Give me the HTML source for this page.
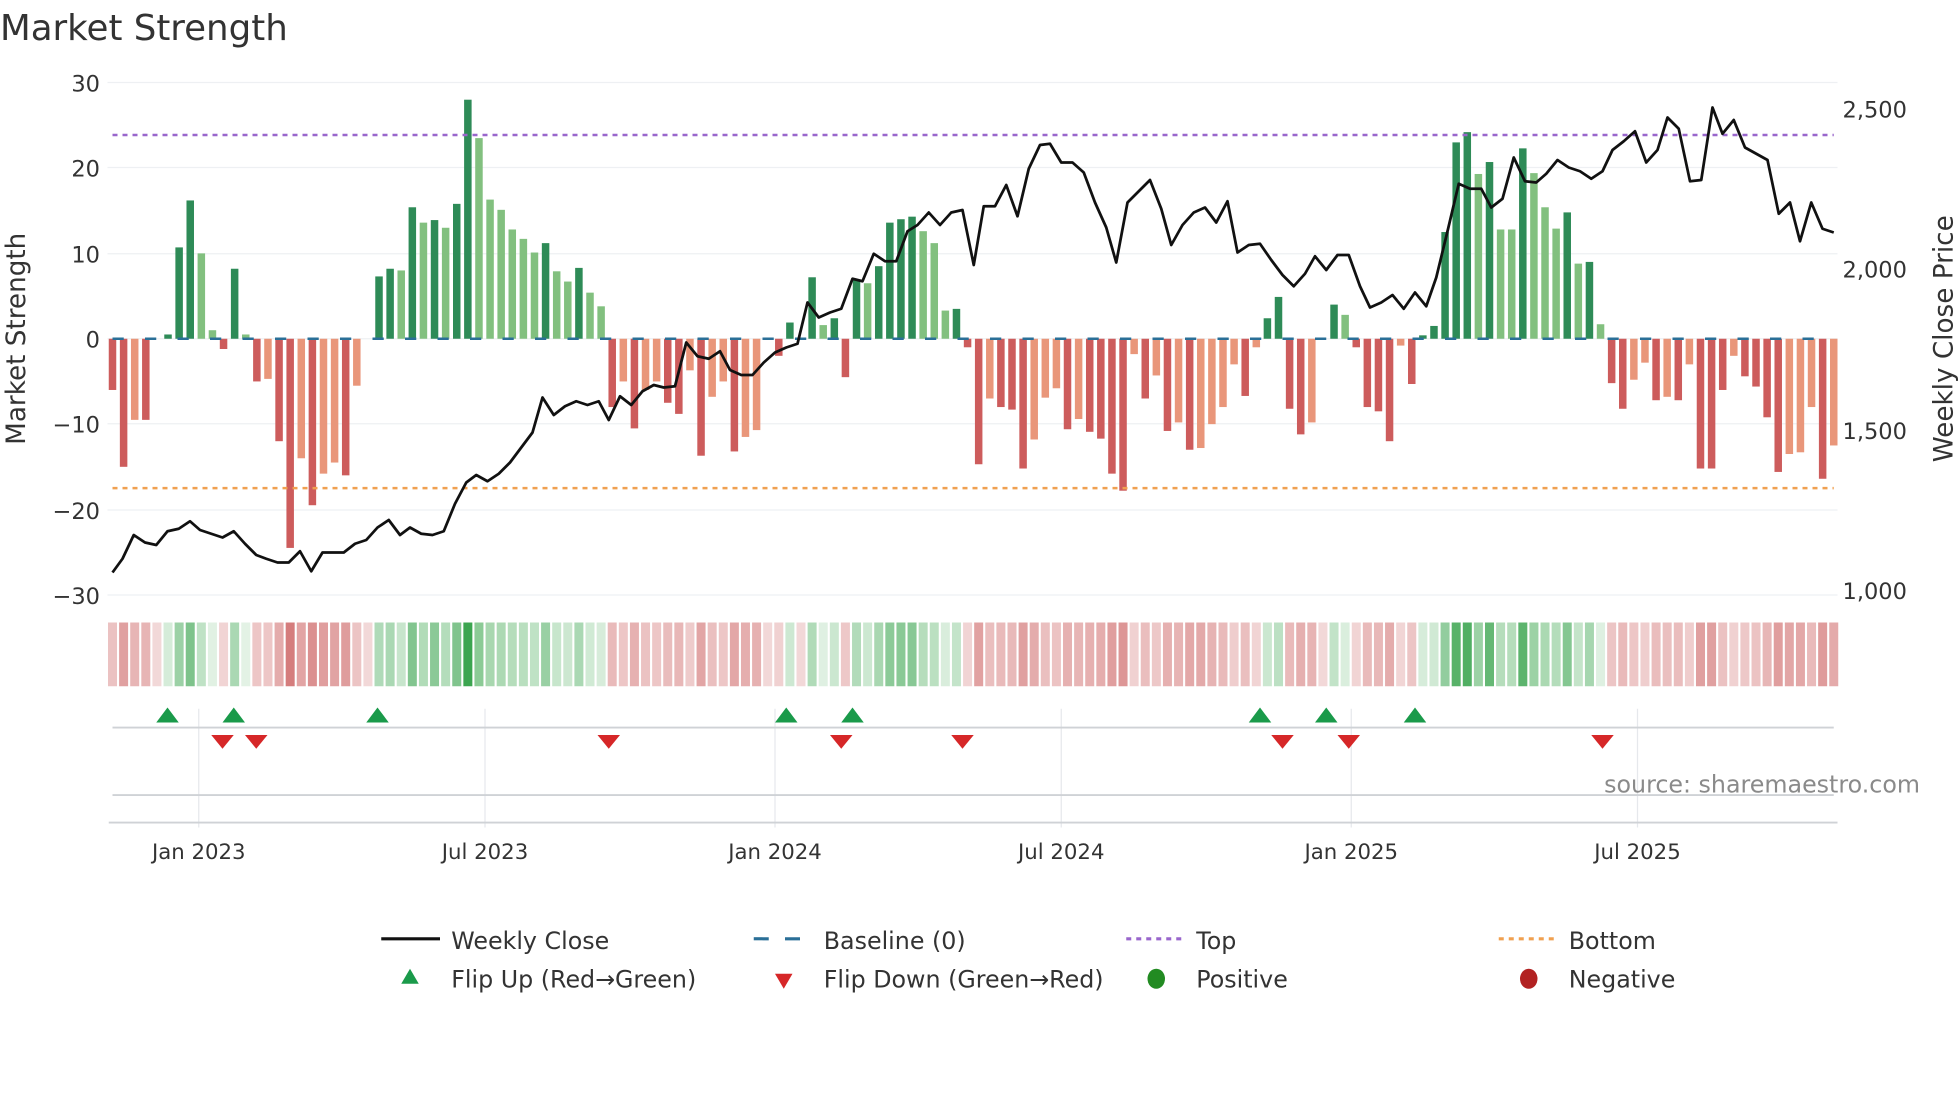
<!DOCTYPE html>
<html><head><meta charset="utf-8"><style>
html,body{margin:0;padding:0;background:#fff;width:1960px;height:1102px;overflow:hidden}
svg{display:block}
text{font-family:"DejaVu Sans","Liberation Sans",sans-serif;fill:#333}
</style></head><body>
<svg id="s" width="1960" height="1102" viewBox="0 0 1568 881.6" xmlns="http://www.w3.org/2000/svg">
<text x="0" y="32" font-size="28.5" fill="#333">Market Strength</text>
<g id="grid"></g>
<g id="bars"></g>
<line x1="90" y1="271" x2="1467" y2="271" stroke="#2a6f97" stroke-width="2" stroke-dasharray="9,17"/>
<line x1="90" y1="108" x2="1467" y2="108" stroke="#9966cc" stroke-width="2" stroke-dasharray="4,4"/>
<line x1="90" y1="390.5" x2="1467" y2="390.5" stroke="#f0a050" stroke-width="2" stroke-dasharray="4,4"/>
<polyline id="price" fill="none" stroke="#111" stroke-width="2.2" stroke-linejoin="round"/>
<g id="heat"></g>
<g id="flips"></g>
<g font-size="18" text-anchor="end">
<text x="80" y="73">30</text><text x="80" y="141">20</text><text x="80" y="210">10</text><text x="80" y="278">0</text>
<text x="80" y="346">−10</text><text x="80" y="415">−20</text><text x="80" y="483">−30</text>
</g>
<g font-size="18" text-anchor="start">
<text x="1474" y="94">2,500</text><text x="1474" y="222">2,000</text><text x="1474" y="351">1,500</text><text x="1474" y="479">1,000</text>
</g>
<text transform="translate(20,271) rotate(-90)" font-size="21" text-anchor="middle">Market Strength</text>
<text transform="translate(1562,271) rotate(-90)" font-size="21" text-anchor="middle">Weekly Close Price</text>
<g font-size="17" text-anchor="middle">
<text x="159" y="687">Jan 2023</text><text x="388" y="687">Jul 2023</text><text x="620" y="687">Jan 2024</text>
<text x="849" y="687">Jul 2024</text><text x="1081" y="687">Jan 2025</text><text x="1310" y="687">Jul 2025</text>
</g>
<text x="1536" y="634" font-size="19" text-anchor="end" style="fill:#8a8a8a">source: sharemaestro.com</text>
<g font-size="19">
<line x1="305" y1="751" x2="352" y2="751" stroke="#111" stroke-width="2.5"/><text x="361" y="759">Weekly Close</text>
<line x1="603" y1="751" x2="647" y2="751" stroke="#2a6f97" stroke-width="2.5" stroke-dasharray="12,13"/><text x="659" y="759">Baseline (0)</text>
<line x1="901" y1="751" x2="945" y2="751" stroke="#9966cc" stroke-width="2.5" stroke-dasharray="4,4"/><text x="957" y="759">Top</text>
<line x1="1199" y1="751" x2="1243" y2="751" stroke="#f0a050" stroke-width="2.5" stroke-dasharray="4,4"/><text x="1255" y="759">Bottom</text>
<polygon points="321,787 335,787 328,775" fill="#1a9a4a"/><text x="361" y="790">Flip Up (Red→Green)</text>
<polygon points="620,779 634,779 627,791" fill="#d62728"/><text x="659" y="790">Flip Down (Green→Red)</text>
<ellipse cx="925" cy="783" rx="7" ry="8" fill="#228b22"/><text x="957" y="790">Positive</text>
<ellipse cx="1223" cy="783" rx="7" ry="8" fill="#b22222"/><text x="1255" y="790">Negative</text>
</g>
</svg>
<script>
var NS="http://www.w3.org/2000/svg";
function el(p,t,a){var e=document.createElementNS(NS,t);for(var k in a)e.setAttribute(k,a[k]);p.appendChild(e);return e;}
var g=document.getElementById('grid');
[66,134,203,271,339,408,476].forEach(function(y){el(g,'line',{x1:86,x2:1470,y1:y,y2:y,stroke:'#eef0f3','stroke-width':1});});
[159,388,620,849,1081,1310].forEach(function(x){el(g,'line',{x1:x,x2:x,y1:567,y2:662,stroke:'#e6e8ec','stroke-width':1});});
el(g,'line',{x1:90,x2:1467,y1:582,y2:582,stroke:'#cfd2d6','stroke-width':1.5});
el(g,'line',{x1:90,x2:1467,y1:636,y2:636,stroke:'#cfd2d6','stroke-width':1.5});
el(g,'line',{x1:87,x2:1470,y1:658,y2:658,stroke:'#cfd2d6','stroke-width':1.5});
var d="-6R -15R -9.5S -9.5R 0Z 0.5D 10.7D 16.2D 10L 1L -1.2R 8.2D 0.5L -5R -4.7S -12R -24.5R -14S -19.5R -15.8S -14.5S -16R -5.5S 0Z 7.3D 8.2D 8L 15.4D 13.6L 13.9D 13L 15.8D 28D 23.5L 16.3L 15.1L 12.8L 11.7L 10.1L 11.2D 7.9L 6.7L 8.3D 5.4L 3.8L -8R -5S -10.5R -6S -5S -7.5R -8.8R -3.7S -13.7R -6.8S -5S -13.2R -11.5S -10.7S 0Z -2R 1.9D 0Z 7.2D 1.6L 2.4D -4.5R 6.9D 6.5L 8.5D 13.6D 14D 14.3D 12.6L 11.2L 3.3L 3.5D -1R -14.7R -7S -8R -8.3R -15.2R -11.8S -6.9S -5.8S -10.6R -9.4S -10.9R -11.7R -15.8R -17.8R -1.8S -7R -4.3S -10.8R -9.8S -13R -12.8S -10S -8S -3S -6.7R -1S 2.4D 4.9D -8.2R -11.2R -9.8S 0Z 4D 2.8L -1R -8R -8.5R -12R -0.8S -5.3R 0.4D 1.5D 12.5D 23D 24.2D 19.3L 20.7D 12.8L 12.8L 22.3D 19.4L 15.4L 12.9L 14.8D 8.8L 9D 1.7L -5.2R -8.2R -4.8S -2.8S -7.2R -6.8S -7.2R -3S -15.2R -15.2R -6R -2S -4.4R -5.6R -9.2R -15.6R -13.5S -13.3S -8S -16.4R -12.5S".split(" ");
var n=d.length, x0=90, x1=1467, step=(x1-x0)/(n-1);
var cols={D:'#2e8b57',L:'#82c07f',R:'#cd5c5c',S:'#e9967a'};
var b=document.getElementById('bars'), h=document.getElementById('heat');
d.forEach(function(s,i){
 var t=s.slice(-1), v=parseFloat(s), x=x0+i*step;
 if(t!='Z'){var y0=271, y=271-v*6.83; el(b,'rect',{x:x-3,y:Math.min(y0,y),width:6,height:Math.max(1,Math.abs(y-y0)),fill:cols[t]});}
 var a=Math.min(1,0.2+Math.abs(v)/28*0.8);
 var c=v>0?'rgba(60,165,80,'+a+')':(v<0?'rgba(205,100,100,'+Math.min(1,0.25+Math.abs(v)/25*0.6)+')':'rgba(205,100,100,0.25)');
 if(v>0&&t=='L')c='rgba(80,175,95,'+(a*0.75)+')';
 el(h,'rect',{x:x-3.6,y:498,width:7.2,height:51,fill:c});
});
var pts=[[90,458],[98,447],[107,428],[116,434],[125,436],[134,425],[143,423],[152,417],[160,424],[169,427],[178,430],[187,425],[196,435],[205,444],[213,447],[222,450],[231,450],[240,441],[249,457],[258,442],[266,442],[275,442],[284,435],[293,432],[302,422],[311,416],[320,428],[328,422],[337,427],[346,428],[355,425],[364,403],[373,386],[381,380],[390,385],[399,379],[408,370],[417,358],[426,346],[434,318],[443,332],[452,325],[461,321],[470,324],[479,321],[487,336],[496,317],[505,324],[514,313],[523,308],[531,310],[540,309],[549,274],[558,285],[567,287],[576,281],[584,296],[593,300],[602,300],[611,290],[620,282],[629,278],[638,275],[646,242],[655,254],[664,250],[673,247],[682,223],[690,225],[699,203],[708,209],[717,209],[726,185],[734,180],[743,170],[752,180],[761,170],[770,168],[779,212],[787,165],[796,165],[805,148],[814,173],[823,135],[832,116],[840,115],[849,130],[858,130],[867,138],[876,162],[885,182],[893,210],[902,162],[911,153],[920,144],[929,167],[937,196],[946,180],[955,170],[964,166],[973,178],[982,161],[990,202],[999,196],[1008,195],[1017,208],[1026,220],[1035,229],[1044,219],[1052,205],[1061,216],[1070,204],[1079,204],[1088,229],[1096,246],[1105,242],[1114,236],[1123,247],[1132,234],[1141,245],[1149,222],[1158,185],[1167,147],[1176,151],[1185,151],[1193,166],[1202,159],[1211,126],[1220,145],[1229,146],[1237,139],[1246,128],[1255,134],[1264,137],[1273,143],[1282,137],[1290,120],[1299,113],[1308,105],[1317,130],[1326,120],[1334,94],[1343,103],[1352,145],[1361,144],[1370,86],[1378,107],[1387,96],[1396,118],[1405,123],[1414,128],[1423,171],[1432,162],[1440,193],[1449,162],[1458,183],[1467,186]];
document.getElementById('price').setAttribute('points',pts.map(function(p){return p.join(',')}).join(' '));
var f=document.getElementById('flips');
[134,187,302,629,682,1008,1061,1132].forEach(function(x){el(f,'polygon',{points:(x-9)+',578 '+(x+9)+',578 '+x+',566',fill:'#1a9a4a'});});
[178,205,487,673,770,1026,1079,1282].forEach(function(x){el(f,'polygon',{points:(x-9)+',588 '+(x+9)+',588 '+x+',599',fill:'#d62728'});});
</script>
</body></html>
